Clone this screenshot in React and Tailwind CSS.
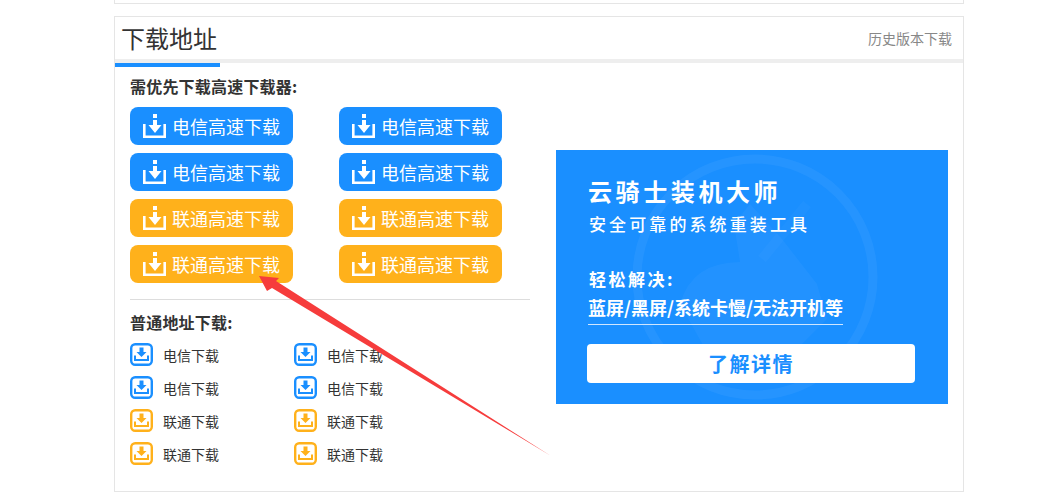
const font = { fontFamily: '"Noto Sans CJK SC", sans-serif' };

function BigIcon() {
  return (
    <svg width="23" height="24" viewBox="0 0 23 24" className="shrink-0" fill="#fff">
      <rect x="10" y="0" width="4" height="4" />
      <rect x="10" y="6" width="4" height="7" />
      <path d="M5.5 11 H18.5 L12 19 Z" />
      <path d="M0 10 H2.6 V21.4 H20.4 V10 H23 V24 H0 Z" />
    </svg>
  );
}

function SmallIcon({ color }) {
  return (
    <svg width="23" height="23" viewBox="0 0 23 23" className="shrink-0" fill="none">
      <rect x="1.2" y="1.2" width="20.6" height="20.6" rx="4" stroke={color} strokeWidth="2.4" />
      <path d="M9.5 4.5 H13.5 V9 H16.5 L11.5 14 L6.5 9 H9.5 Z" fill={color} />
      <path d="M5 12.5 V17 H18 V12.5" stroke={color} strokeWidth="2" />
    </svg>
  );
}

function FastButton({ label, color }) {
  return (
    <a className={`flex h-[38px] w-[163px] items-center rounded-lg pl-[13px] text-[18px] text-white ${color}`}>
      <BigIcon />
      <span className="ml-[6px] whitespace-nowrap">{label}</span>
    </a>
  );
}

function SlowLink({ label, color }) {
  return (
    <a className="flex h-[23px] w-[164px] items-center text-sm text-[#333]">
      <SmallIcon color={color} />
      <span className="ml-[10px] whitespace-nowrap">{label}</span>
    </a>
  );
}

function Banner() {
  return (
    <div className="relative h-[254px] w-[392px] shrink-0 overflow-hidden bg-[#1a8fff] pl-[33px] text-white">
      <svg className="absolute left-[76px] top-[4px]" width="246" height="246" viewBox="0 0 246 246" fill="none">
        <circle cx="123" cy="123" r="118" stroke="#fff" strokeOpacity="0.05" strokeWidth="9" />
        <path d="M48 150 Q60 108 108 108 L102 70 L118 50 L150 85 L185 130 L195 165 L170 190 L150 215 L90 225 Z" fill="#fff" fillOpacity="0.035" />
        <path d="M175 50 L130 105" stroke="#fff" strokeOpacity="0.025" strokeWidth="10" />
      </svg>
      <div className="relative">
        <p className="mt-[23px] -ml-px text-[24px] font-bold leading-[36px] tracking-[3.6px] whitespace-nowrap">云骑士装机大师</p>
        <p className="mt-[3px] text-[17px] font-medium leading-[24px] tracking-[3.1px] whitespace-nowrap">安全可靠的系统重装工具</p>
        <p className="mt-[30px] text-[17px] font-bold leading-[26px] tracking-[2.5px] whitespace-nowrap">轻松解决:</p>
        <p className="mt-[1px] -ml-px h-[32px] w-[255px] border-b border-[#cfe6ff] pt-[1px] text-[18px] font-bold leading-[26px] whitespace-nowrap">蓝屏/黑屏/系统卡慢/无法开机等</p>
        <div className="mt-[19px] -ml-[2px] flex h-[39px] w-[328px] items-center justify-center rounded bg-white text-[20px] font-bold tracking-[1.5px] text-[#1a8fff]">了解详情</div>
      </div>
    </div>
  );
}

export default function App() {
  const fast = [
    ['电信高速下载', 'bg-[#1a8fff]'],
    ['电信高速下载', 'bg-[#1a8fff]'],
    ['电信高速下载', 'bg-[#1a8fff]'],
    ['电信高速下载', 'bg-[#1a8fff]'],
    ['联通高速下载', 'bg-[#ffb11b]'],
    ['联通高速下载', 'bg-[#ffb11b]'],
    ['联通高速下载', 'bg-[#ffb11b]'],
    ['联通高速下载', 'bg-[#ffb11b]'],
  ];
  const slow = [
    ['电信下载', '#1a8fff'],
    ['电信下载', '#1a8fff'],
    ['电信下载', '#1a8fff'],
    ['电信下载', '#1a8fff'],
    ['联通下载', '#ffb11b'],
    ['联通下载', '#ffb11b'],
    ['联通下载', '#ffb11b'],
    ['联通下载', '#ffb11b'],
  ];

  return (
    <div className="relative h-[493px] w-[1050px] overflow-hidden bg-white" style={font}>
      <div className="ml-[114px] h-[4px] w-[850px] border-x border-b border-[#e5e5e5]" />

      <div className="ml-[114px] mt-[12px] h-[476px] w-[850px] border border-[#e5e5e5]">
        <div className="flex h-[46px] items-start justify-between border-b-4 border-[#eeeeee]">
          <div className="relative h-[46px] w-[105px]">
            <h2 className="pl-[6px] text-[24px] leading-[42px] font-normal text-[#333] whitespace-nowrap">下载地址</h2>
            <div className="absolute bottom-[-4px] left-0 h-[4px] w-[105px] bg-[#1a8fff]" />
          </div>
          <a className="pr-[11px] pt-[11px] text-sm leading-[20px] text-[#888]">历史版本下载</a>
        </div>

        <div className="flex pl-[15px]">
          <div className="w-[401px]">
            <h3 className="mt-[11px] text-base leading-[24px] font-bold tracking-[0.2px] text-[#333]">需优先下载高速下载器:</h3>
            <div className="mt-[9px] grid w-[372px] grid-cols-[163px_163px] gap-x-[46px] gap-y-[8px]">
              {fast.map(([label, color], i) => (
                <FastButton key={i} label={label} color={color} />
              ))}
            </div>
            <div className="mt-[16px] h-px w-[400px] bg-[#dddddd]" />
            <h3 className="mt-[10px] text-base leading-[24px] font-bold tracking-[0.2px] text-[#333]">普通地址下载:</h3>
            <div className="mt-[9px] grid grid-cols-[164px_164px] gap-y-[10px]">
              {slow.map(([label, color], i) => (
                <SlowLink key={i} label={label} color={color} />
              ))}
            </div>
          </div>
          <div className="ml-[25px] mt-[87px]">
            <Banner />
          </div>
        </div>
      </div>

      {/* red annotation arrow drawn over the page */}
      <svg className="absolute left-0 top-0" width="1050" height="493" viewBox="0 0 1050 493">
        <polygon points="259,276 279,278 276,281 551,456 272,288 267,291" fill="#f63c3c" />
      </svg>
    </div>
  );
}
